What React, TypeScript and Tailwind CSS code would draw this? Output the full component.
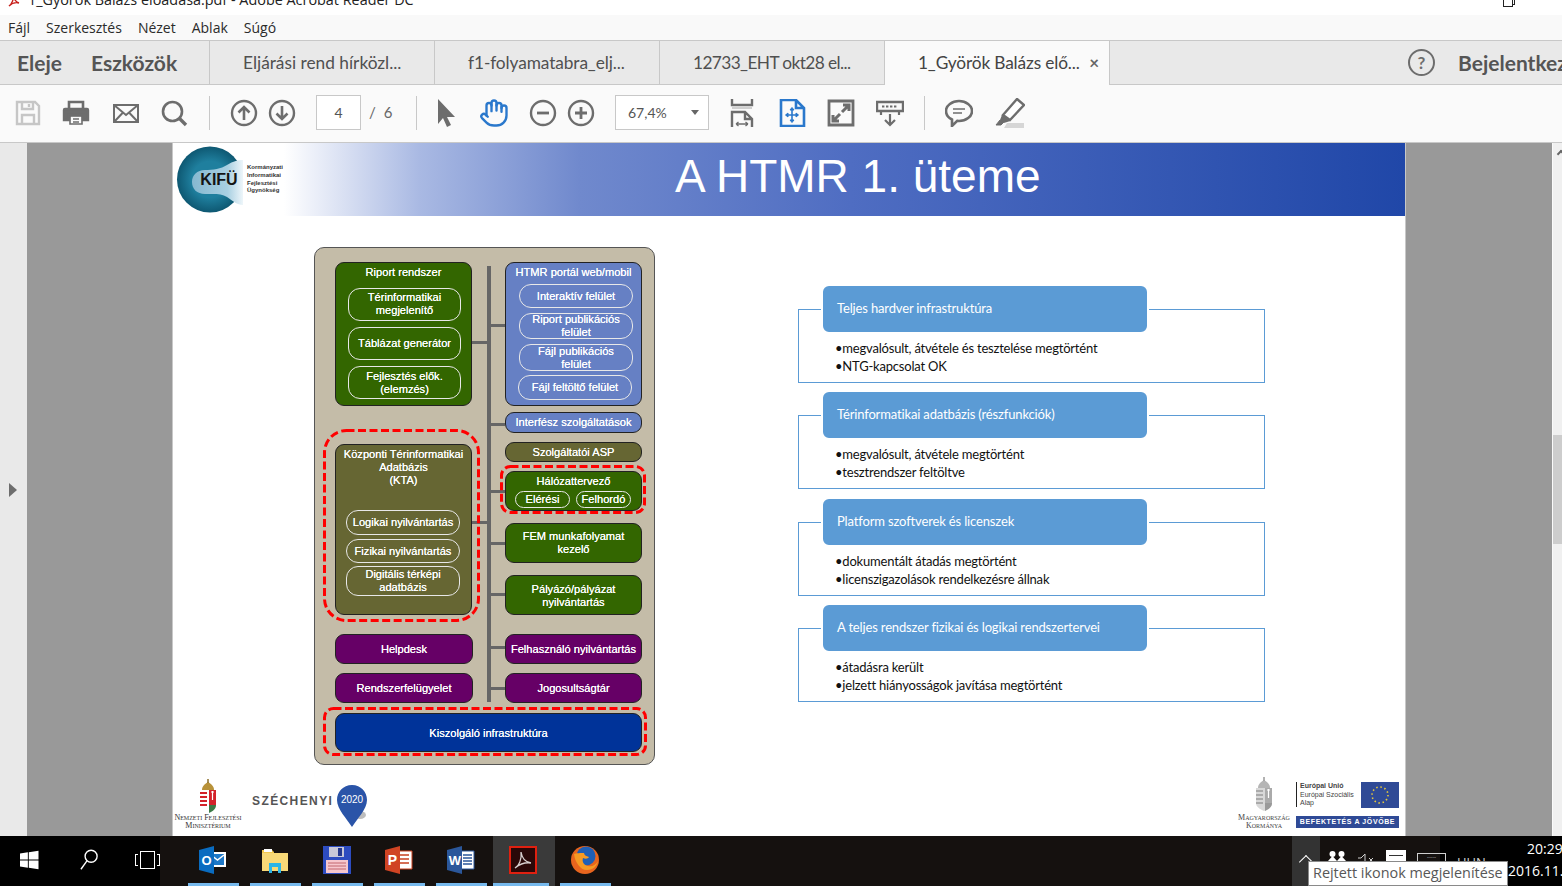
import { Hand } from 'lucide-react'
import type { ReactNode } from 'react'

const Sep = ({ className }: { className: string }) => <div className={`w-px h-[34px] bg-[#c8c8c8] shrink-0 ${className}`} />

const Icon = ({ className, children }: { className?: string; children: ReactNode }) => (
    <svg viewBox="0 0 28 28" className={`w-7 h-7 shrink-0 fill-none stroke-[#6d6d6d] ${className ?? ''}`} strokeWidth="2.4">
        {children}
    </svg>
)

const Toolbar = () => (
    <div className="flex h-[57px] items-center bg-[#fafafa] pb-[2px] pl-[14px] shrink-0">
        <Icon>
            <g stroke="#c6c6c6">
                <path d="M3 3h18l4 4v18H3z M8 3v7h11V3 M15 5v3 M8 25v-9h12v9" />
            </g>
        </Icon>
        <Icon className="ml-5">
            <path d="M7 9V3h14v6" strokeWidth="2.6" />
            <path d="M3 10h22a1 1 0 0 1 1 1v10h-5v-5H7v5H2V11a1 1 0 0 1 1-1z" fill="#6d6d6d" />
            <path d="M8 17h12v8H8z M11 20h6 M11 23h6" strokeWidth="1.6" />
        </Icon>
        <Icon className="ml-[22px]">
            <path d="M2 6h24v17H2z M2 6l12 10L26 6 M2 23l9-9.5 M26 23l-9-9.5" strokeWidth="2" />
        </Icon>
        <Icon className="ml-5">
            <circle cx="12.5" cy="12.5" r="9.5" strokeWidth="2.6" />
            <path d="M19.5 19.5l6.5 6.5" strokeWidth="3.4" />
        </Icon>
        <Sep className="ml-[21px]" />
        <Icon className="ml-5">
            <circle cx="14" cy="14" r="12" />
            <path d="M14 21V8 M8.5 13.5L14 8l5.5 5.5" strokeWidth="2.6" />
        </Icon>
        <Icon className="ml-[10px]">
            <circle cx="14" cy="14" r="12" />
            <path d="M14 7v13 M8.5 14.5L14 20l5.5-5.5" strokeWidth="2.6" />
        </Icon>
        <div className="ml-5 flex h-[35px] w-[45px] shrink-0 items-center justify-center border border-[#c8c8c8] bg-white text-[14px] text-[#555]">4</div>
        <div className="flex w-[47px] shrink-0 justify-start gap-[8px] pl-2 text-[15px] text-[#666]">
            <span>/</span>
            <span>6</span>
        </div>
        <Sep className="ml-[8px]" />
        <Icon className="ml-[15px]">
            <path d="M6 0l17 18h-8l4 8-4 2-4-9-5 6z" fill="#6d6d6d" stroke="none" />
        </Icon>
        <Hand className="ml-[19px] w-[30px] h-[30px] shrink-0 text-[#2a78cc]" strokeWidth={1.9} />
        <Icon className="ml-5">
            <circle cx="14" cy="14" r="12" />
            <path d="M8 14h12" strokeWidth="2.8" />
        </Icon>
        <Icon className="ml-[10px]">
            <circle cx="14" cy="14" r="12" />
            <path d="M8 14h12 M14 8v12" strokeWidth="2.8" />
        </Icon>
        <div className="ml-5 flex h-[35px] w-[94px] shrink-0 items-center justify-between border border-[#c8c8c8] bg-white pl-3 pr-[9px] text-[14px] text-[#555]">
            <span>67,4%</span>
            <span className="h-0 w-0 border-x-4 border-t-[5px] border-x-transparent border-t-[#666]" />
        </div>
        <Icon className="ml-[19px]">
            <path d="M4 0v6h20V0" strokeWidth="2.4" />
            <path d="M4 9h20" stroke="#d0d0d0" strokeWidth="2" />
            <path d="M4 28V13h13l7 7v8 M17 13v7h7" strokeWidth="2.4" />
            <path d="M8 25h12 M8 25l2.5-2 M8 25l2.5 2 M20 25l-2.5-2 M20 25l-2.5 2" strokeWidth="1.3" />
        </Icon>
        <Icon className="ml-[22px]">
            <g stroke="#2a78cc">
                <path d="M3 1h15l8 8v18H3z M18 1v8h8" strokeWidth="2.6" />
                <path d="M14 10v12 M8 16h12" strokeWidth="1.6" />
                <path d="M12 11l2-2.5 2 2.5z M12 21l2 2.5 2-2.5z M10 14l-2.5 2 2.5 2z M18 14l2.5 2-2.5 2z" fill="#2a78cc" strokeWidth="1" />
            </g>
        </Icon>
        <Icon className="ml-[21px]">
            <path d="M2 2h24v24H2z" strokeWidth="2.8" />
            <path d="M15 13l7-7 M16 6h6v6 M13 15l-7 7 M6 16v6h6" strokeWidth="3" />
        </Icon>
        <Icon className="ml-[21px]">
            <path d="M1 3h26v9H1z" strokeWidth="2.4" />
            <path d="M6 7.5h16" strokeWidth="2.2" strokeDasharray="2.4 1.6" />
            <path d="M5 12v4 M23 12v4 M14 15v11 M9 21l5 5 5-5" strokeWidth="2.2" />
        </Icon>
        <Sep className="ml-5" />
        <Icon className="ml-5">
            <path d="M14 2c7 0 13 4.5 13 10s-6 10-13 10c-.6 0-1.2 0-1.8-.1L7 27v-6.500C3.400 18.800 1 15.500 1 12 1 6.500 7 2 14 2z" strokeWidth="2.6" />
            <path d="M8 10h12 M8 14h9" strokeWidth="1.5" />
        </Icon>
        <svg viewBox="0 0 30 30" className="ml-[22px] h-[30px] w-[30px] shrink-0 fill-none stroke-[#6d6d6d]" strokeWidth="2.4">
            <path d="M22 1l7 6L15 22l-7-5z" fill="#fff" />
            <path d="M8 17l-2 5 3 2 6-2" fill="#6d6d6d" strokeWidth="2" />
            <path d="M5 22l-4 5h5l3-3" fill="#6d6d6d" strokeWidth="1" />
            <path d="M12 25h17v5H9z" fill="#d6d6d6" stroke="none" />
        </svg>
    </div>
)

const Tab = ({ label, active, className }: { label: string; active?: boolean; className?: string }) => (
    <div className={`relative flex w-[225px] shrink-0 items-center border-r border-[#c8c8c8] pl-[33px] text-[17.3px] ${active ? 'h-[44px] bg-[#fafafa] pb-px text-[#444]' : 'h-[43px] text-[#505050]'} ${className ?? ''}`}>
        {label}
        {active && <span className="absolute right-[10px] top-[9px] text-[17px] font-bold tracking-normal text-[#666]">×</span>}
    </div>
)

const Chrome = () => (
    <div className="flex flex-col shrink-0 font-['Lato',sans-serif]">
        <div className="relative h-[15px] overflow-hidden bg-white">
            <div className="flex -mt-[11px] items-center gap-[8px] pl-2 font-['Open_Sans',sans-serif] text-[14.4px] text-[#222]">
                <svg viewBox="0 0 12 16" className="h-4 w-3 fill-none stroke-[#c8201c]" strokeWidth="1.4">
                    <path d="M1 14c3-2 5-7 4-11 1 5 3 7 6 8-4-1-7 0-10 3z" />
                </svg>
                <span>1_Györök Balázs előadása.pdf - Adobe Acrobat Reader DC</span>
            </div>
            <div className="absolute left-[1505px] -top-[5px] h-[10px] w-[10px] border border-[#222] bg-white" />
            <div className="absolute left-[1503px] -top-[3px] h-[10px] w-[10px] border border-[#222] bg-white" />
        </div>
        <div className="flex h-[25px] items-center gap-[16px] bg-[#f9f9f9] pl-2 font-['Open_Sans',sans-serif] text-[14px] text-[#2b2b2b]">
            <span>Fájl</span>
            <span>Szerkesztés</span>
            <span>Nézet</span>
            <span>Ablak</span>
            <span>Súgó</span>
        </div>
        <div className="flex h-[45px] items-start border-y border-[#c8c8c8] bg-[#e9e9e9]">
            <div className="flex h-[43px] w-[210px] shrink-0 items-center gap-[29px] border-r border-[#c8c8c8] pl-[17px] text-[21px] font-bold text-[#555]">
                <span>Eleje</span>
                <span>Eszközök</span>
            </div>
            <Tab label="Eljárási rend hírközl..." />
            <Tab label="f1-folyamatabra_elj..." className="tracking-[-0.1px]" />
            <Tab label="12733_EHT okt28 el..." className="tracking-[-0.6px]" />
            <Tab label="1_Györök Balázs elő..." active className="tracking-[-0.15px]" />
            <div className="ml-auto flex h-[43px] items-center gap-[23px] overflow-hidden">
                <div className="flex h-[27px] w-[27px] items-center justify-center rounded-full border-[2.5px] border-[#6d6d6d] text-[17px] font-bold text-[#6d6d6d]">?</div>
                <span className="w-[104px] whitespace-nowrap text-[21px] font-bold text-[#555]">Bejelentkezés</span>
            </div>
        </div>
        <Toolbar />
    </div>
)

const Box = ({ className, children }: { className: string; children?: ReactNode }) => (
    <div className={`absolute flex justify-center text-center text-[11.1px] leading-[13px] text-white [text-shadow:0_0_0.6px_#fff] ${className}`}>{children}</div>
)

const Pill = ({ className, children }: { className: string; children: ReactNode }) => (
    <Box className={`items-center rounded-[12px] border-[1.5px] border-[#e8e8e8] ${className}`}>{children}</Box>
)

const Link = ({ className }: { className: string }) => <div className={`absolute h-[3px] bg-[#666] ${className}`} />

// dashed red frame, drawn so the dash length can follow the slide
const Dash = ({ className, w, h, r }: { className: string; w: number; h: number; r: number }) => (
    <svg className={`absolute ${className}`} width={w} height={h} fill="none">
        <rect x="1.5" y="1.5" width={w - 3} height={h - 3} rx={r} stroke="#ff0000" strokeWidth="3" strokeDasharray="8 3.5" />
    </svg>
)

const solid = 'items-center rounded-[9px] border border-[#222]'
const green = 'bg-[#336600]'
const purple = 'bg-[#660066]'
const olive = 'bg-[#666633]'
const blue = 'bg-[#6680c4]'

const Diagram = () => (
    <div className="relative ml-[141px] mt-[31px] h-[518px] w-[341px] shrink-0 rounded-[10px] border border-[#555] bg-[#c4bca8] font-['Liberation_Sans',sans-serif]">
        <div className="absolute left-[172px] top-[18px] h-[436px] w-1 bg-[#666]" />
        <Link className="left-[157px] top-[93px] w-[16px]" />
        <Link className="left-[157px] top-[273px] w-[16px]" />
        <Link className="left-[176px] top-[76px] w-[14px]" />
        <Link className="left-[176px] top-[175px] w-[14px]" />
        <Link className="left-[176px] top-[242px] w-[14px]" />
        <Link className="left-[176px] top-[294px] w-[14px]" />
        <Link className="left-[176px] top-[345px] w-[14px]" />
        <Link className="left-[176px] top-[398px] w-[14px]" />
        <Link className="left-[176px] top-[439px] w-[14px]" />

        <Box className={`left-[20px] top-[14px] h-[144px] w-[137px] rounded-[9px] border border-[#222] pt-[3px] ${green}`}>Riport rendszer</Box>
        <Pill className="left-[33px] top-[40px] h-[33px] w-[113px] pb-[2px]">Térinformatikai<br />megjelenítő</Pill>
        <Pill className="left-[33px] top-[79px] h-[33px] w-[113px]">Táblázat generátor</Pill>
        <Pill className="left-[33px] top-[118px] h-[33px] w-[113px]">Fejlesztés elők.<br />(elemzés)</Pill>

        <Box className={`left-[190px] top-[14px] h-[144px] w-[137px] rounded-[9px] border border-[#222] pt-[3px] ${blue}`}>HTMR portál web/mobil</Box>
        <Pill className="left-[204px] top-[36px] h-[24px] w-[114px]">Interaktív felület</Pill>
        <Pill className="left-[204px] top-[65px] h-[26px] w-[114px]">Riport publikációs<br />felület</Pill>
        <Pill className="left-[204px] top-[96px] h-[27px] w-[114px]">Fájl publikációs<br />felület</Pill>
        <Pill className="left-[203px] top-[127px] h-[25px] w-[114px]">Fájl feltöltő felület</Pill>

        <Box className={`left-[190px] top-[164px] h-[21px] w-[137px] ${solid} ${blue}`}>Interfész szolgáltatások</Box>
        <Box className={`left-[190px] top-[194px] h-[20px] w-[137px] ${solid} ${olive}`}>Szolgáltatói ASP</Box>
        <Dash className="left-[185px] top-[217px]" w={146} h={49} r={9} />
        <Box className={`left-[190px] top-[223px] h-[40px] w-[137px] rounded-[9px] border border-[#222] pt-[3px] ${green}`}>Hálózattervező</Box>
        <Pill className="left-[200px] top-[243px] h-[17px] w-[55px]">Elérési</Pill>
        <Pill className="left-[261px] top-[243px] h-[17px] w-[55px]">Felhordó</Pill>

        <Dash className="left-[8px] top-[181px]" w={157} h={193} r={22} />
        <Box className={`left-[20px] top-[196px] h-[171px] w-[137px] rounded-[9px] border border-[#222] pt-[3px] ${olive}`}>Központi Térinformatikai<br />Adatbázis<br />(KTA)</Box>
        <Pill className="left-[31px] top-[262px] h-[25px] w-[114px]">Logikai nyilvántartás</Pill>
        <Pill className="left-[31px] top-[291px] h-[24px] w-[114px]">Fizikai nyilvántartás</Pill>
        <Pill className="left-[31px] top-[318px] h-[30px] w-[114px]">Digitális térképi<br />adatbázis</Pill>

        <Box className={`left-[190px] top-[275px] h-[40px] w-[137px] ${solid} ${green}`}>FEM munkafolyamat<br />kezelő</Box>
        <Box className={`left-[190px] top-[327px] h-[40px] w-[137px] pt-px ${solid} ${green}`}>Pályázó/pályázat<br />nyilvántartás</Box>
        <Box className={`left-[20px] top-[386px] h-[30px] w-[138px] ${solid} ${purple}`}>Helpdesk</Box>
        <Box className={`left-[20px] top-[425px] h-[30px] w-[138px] ${solid} ${purple}`}>Rendszerfelügyelet</Box>
        <Box className={`left-[190px] top-[386px] h-[30px] w-[137px] ${solid} ${purple}`}>Felhasználó nyilvántartás</Box>
        <Box className={`left-[190px] top-[425px] h-[30px] w-[137px] ${solid} ${purple}`}>Jogosultságtár</Box>

        <Dash className="left-[8px] top-[459px]" w={324} h={49} r={9} />
        <Box className={`left-[20px] top-[465px] h-[39px] w-[307px] pt-px ${solid} bg-[#003399]`}>Kiszolgáló infrastruktúra</Box>
    </div>
)

const cards = [
    { title: 'Teljes hardver infrastruktúra', lines: ['megvalósult, átvétele és tesztelése megtörtént', 'NTG-kapcsolat OK'] },
    { title: 'Térinformatikai adatbázis (részfunkciók)', lines: ['megvalósult, átvétele megtörtént', 'tesztrendszer feltöltve'] },
    { title: 'Platform szoftverek és licenszek', lines: ['dokumentált átadás megtörtént', 'licenszigazolások rendelkezésre állnak'] },
    { title: 'A teljes rendszer fizikai és logikai rendszertervei', lines: ['átadásra került', 'jelzett hiányosságok javítása megtörtént'] },
]

const Cards = () => (
    <div className="ml-[143px] mt-[70px] flex w-[467px] shrink-0 flex-col gap-[9px] font-['Lato',sans-serif]">
        {cards.map((c) => (
            <div key={c.title} className="relative pt-[23px] nth-3:mt-px">
                <div className="h-[74px] border border-[#5b9bd5] pl-[36px] pt-[30px] text-[13px] leading-[17.5px] tracking-[-0.2px] text-[#111]">
                    {c.lines.map((l) => (
                        <div key={l}>•{l}</div>
                    ))}
                </div>
                <div className="absolute left-[23px] top-[-2px] flex h-[50px] w-[328px] items-center rounded-[8px] border-2 border-white bg-[#5b9bd5] pl-[14px] text-[13px] tracking-[-0.15px] text-white">
                    {c.title}
                </div>
            </div>
        ))}
    </div>
)

const Crest = ({ gray }: { gray?: boolean }) => (
    <svg viewBox="0 0 18 34" className="h-[34px] w-[18px]">
        <path d="M3 11c0-4 3-6 6-8 3 2 6 4 6 8z" fill={gray ? '#b5b5b5' : '#b8923a'} />
        <path d="M9 0v4" stroke={gray ? '#999' : '#8a6d2a'} strokeWidth="1.5" />
        <path d="M1 11h16v15c0 4-4 6-8 8-4-2-8-4-8-8z" fill={gray ? '#d8d8d8' : '#fff'} />
        <path d="M1 13h7v2H1z M1 17h7v2H1z M1 21h7v2H1z M1 25h7v2H1z M10 11h7v15h-7z" fill={gray ? '#aaa' : '#d3232b'} />
        <path d="M12 13h3 M13.5 12v9" stroke="#fff" strokeWidth="1.2" />
        <path d="M10 26h7c0 4-3 6-7 8z" fill={gray ? '#999' : '#3b7a46'} />
    </svg>
)

const Footer = () => (
    <div className="flex h-[61px] shrink-0 items-start justify-between">
        <div className="flex items-start pl-px pt-[4px]">
            <div className="flex w-[68px] flex-col items-center font-['Liberation_Serif',serif] text-[8px] leading-[8px] text-[#333] [font-variant:small-caps]">
                <Crest />
                <span className="mt-[1px] whitespace-nowrap">Nemzeti Fejlesztési</span>
                <span>Minisztérium</span>
            </div>
            <span className="ml-[10px] mt-[13px] font-['Liberation_Sans',sans-serif] text-[12px] font-bold tracking-[1.4px] text-[#555]">SZÉCHENYI</span>
            <svg viewBox="0 0 32 42" className="ml-[3px] mt-[6px] h-[42px] w-[32px]">
                <ellipse cx="24" cy="30" rx="6" ry="4" fill="#bdbdbd" />
                <path d="M16 0c9 0 15 7 15 15 0 9-10 19-15 27C11 34 1 24 1 15 1 7 7 0 16 0z" fill="#2a54a8" />
                <text x="16" y="18" textAnchor="middle" fontSize="10" fill="#fff" fontFamily="Liberation Sans">2020</text>
            </svg>
        </div>
        <div className="flex items-start pr-[6px] pt-[2px]">
            <div className="flex w-[56px] flex-col items-center font-['Liberation_Serif',serif] text-[8px] leading-[8px] text-[#444] [font-variant:small-caps]">
                <Crest gray />
                <span className="mt-[3px]">Magyarország</span>
                <span>Kormánya</span>
            </div>
            <div className="ml-[4px] flex w-[103px] flex-col">
                <div className="flex justify-between pt-[5px]">
                    <div className="h-[25px] border-l border-[#222] pl-[3px] font-['Liberation_Sans',sans-serif] text-[7px] leading-[8.5px] text-[#444]">
                        <div className="font-bold">Európai Unió</div>
                        <div>Európai Szociális</div>
                        <div>Alap</div>
                    </div>
                    <svg viewBox="0 0 38 26" className="h-[26px] w-[38px]">
                        <rect width="38" height="26" fill="#2f4a96" />
                        <circle cx="19" cy="13" r="8" fill="none" stroke="#e8c93c" strokeWidth="1.6" strokeDasharray="1.5 2.7" />
                    </svg>
                </div>
                <div className="mt-[8px] flex h-[12px] items-center justify-center bg-[#2f4a96] font-['Liberation_Sans',sans-serif] text-[7px] font-bold tracking-[0.6px] text-white">BEFEKTETÉS A JÖVŐBE</div>
            </div>
        </div>
    </div>
)

const Slide = () => (
    <div className="flex w-[1234px] shrink-0 flex-col border-x border-[#c8c8c8] bg-white">
        <div className="flex h-[73px] shrink-0 items-center bg-[linear-gradient(90deg,#fff_9%,#a9b9e3_20%,#7089cd_33%,#4f6dc2_55%,#2047a8_100%)]">
            <svg viewBox="0 0 72 72" className="ml-[2px] h-[72px] w-[72px] shrink-0">
                <defs>
                    <radialGradient id="kifu" cx="0.5" cy="0.5" r="0.55">
                        <stop offset="0.5" stopColor="#1f7f9e" />
                        <stop offset="1" stopColor="#0a4f68" />
                    </radialGradient>
                    <linearGradient id="kifublob" x1="0" x2="1" y1="0" y2="0">
                        <stop offset="0" stopColor="#86b8d0" />
                        <stop offset="0.7" stopColor="#a9d0e2" />
                        <stop offset="1" stopColor="#eef6fa" />
                    </linearGradient>
                </defs>
                <circle cx="35" cy="35.5" r="33" fill="url(#kifu)" />
                <path d="M30 26C38 26 46 25 52 21C58 17 64 16 68 16L68 61C62 61 58 57 52 53C46 49 38 50 30 50C22 50 17 45 17 38C17 31 22 26 30 26Z" fill="url(#kifublob)" />
                <text x="44" y="41" textAnchor="middle" fontSize="16" fontWeight="700" fill="#141414" fontFamily="Liberation Sans">KIFÜ</text>
            </svg>
            <div className="w-[36px] shrink-0 whitespace-nowrap font-['Liberation_Sans',sans-serif] text-[6px] font-bold leading-[7.7px] text-[#333]">
                <div>Kormányzati</div>
                <div>Informatikai</div>
                <div>Fejlesztési</div>
                <div>Ügynökség</div>
            </div>
            <h1 className="-mt-[6px] ml-[392px] whitespace-nowrap font-['Liberation_Sans',sans-serif] text-[46px] text-white">A HTMR 1. üteme</h1>
        </div>
        <div className="flex h-[559px] shrink-0 items-start">
            <Diagram />
            <Cards />
        </div>
        <Footer />
    </div>
)

const Main = () => (
    <div className="flex h-[694px] border-t border-[#c8c8c8] bg-[#999]">
        <div className="flex w-[27px] shrink-0 items-center bg-[#e9e9e9] pl-[9px]">
            <div className="h-0 w-0 border-y-[7px] border-l-[8px] border-y-transparent border-l-[#6d6d6d]" />
        </div>
        <div className="ml-[145px] flex">
            <Slide />
        </div>
        <div className="ml-[146px] flex w-[10px] shrink-0 flex-col border-l border-[#fafafa] bg-[#f0f0f0]">
            <div className="ml-[5px] mt-[8px] h-[6px] w-[6px] rotate-45 border-l-2 border-t-2 border-[#666]" />
            <div className="mt-[278px] h-[109px] bg-[#cdcdcd]" />
        </div>
    </div>
)

const TaskBtn = ({ children, active }: { children: ReactNode; active?: boolean }) => (
    <div className={`relative flex h-full w-[62px] shrink-0 items-center justify-center pb-[3px] pr-[2px] ${active ? 'bg-[#3a3a3a]' : ''}`}>
        {children}
        <div className={`absolute bottom-0 h-[3px] bg-[#76b9ed] ${active ? 'left-0 right-[6px]' : 'left-[5px] right-[6px]'}`} />
    </div>
)

const Taskbar = () => (
    <div className="relative flex h-[50px] shrink-0 bg-black font-['Open_Sans',sans-serif] text-white">
        <div className="flex w-[160px] shrink-0 items-center pb-[2px]">
            <svg viewBox="0 0 20 20" className="ml-[20px] h-5 w-5 fill-white">
                <path d="M0 3l8.5-1.3v7.800H0z M9.500 1.500L20 0v9.500H9.500z M0 10.500h8.500v7.800L0 17z M9.500 10.500H20V20L9.500 18.500z" />
            </svg>
            <svg viewBox="0 0 20 24" className="ml-[41px] h-6 w-5 fill-none stroke-white" strokeWidth="1.5">
                <circle cx="12" cy="8" r="6.5" />
                <path d="M7.5 13L1 22" />
            </svg>
            <div className="ml-[37px] flex items-center">
                <div className="h-[12px] w-[3px] border-y border-l border-white" />
                <div className="mx-[2px] h-[18px] w-[15px] border border-white" />
                <div className="h-[12px] w-[3px] border-y border-r border-white" />
            </div>
        </div>
        <div className="flex w-[1280px] shrink-0 bg-[#15110f]">
            <div className="ml-[23px] flex h-full">
                <TaskBtn>
                    <svg viewBox="0 0 28 28" className="h-7 w-7">
                        <path d="M10 6h17v15H10z" fill="#fff" />
                        <path d="M12 8h13v11H12z" fill="#1d78c8" />
                        <path d="M12 9l6.5 5L25 9" fill="none" stroke="#fff" strokeWidth="1.5" />
                        <path d="M0 4l15-4v28L0 24z" fill="#0a6cc0" />
                        <text x="7.5" y="18.5" textAnchor="middle" fontSize="13" fontWeight="700" fill="#fff" fontFamily="Liberation Sans">O</text>
                    </svg>
                </TaskBtn>
                <TaskBtn>
                    <svg viewBox="0 0 28 28" className="h-7 w-7">
                        <path d="M1 4h10l2 2v4H1z" fill="#f2c94f" />
                        <path d="M3 3h8v3H3z" fill="#fff" />
                        <path d="M1 7h26v18H1z" fill="#f8d977" />
                        <path d="M8 27V17h12v10h-3v-6h-6v6z" fill="#2cb5e8" />
                    </svg>
                </TaskBtn>
                <TaskBtn>
                    <svg viewBox="0 0 28 28" className="h-7 w-7">
                        <path d="M0 0h28v28H0z" fill="#2d4cc0" />
                        <path d="M6 1h15v10H6z" fill="#c8c8d8" />
                        <path d="M15 2h4v8h-4z" fill="#25388f" />
                        <path d="M3 14h22v13H3z" fill="#f7c7cd" />
                        <path d="M5 17h18 M5 20h18 M5 23h18" stroke="#c2666f" strokeWidth="1" />
                    </svg>
                </TaskBtn>
                <TaskBtn>
                    <svg viewBox="0 0 28 28" className="h-7 w-7">
                        <path d="M12 5h15v18H12z" fill="#fff" stroke="#c8401f" strokeWidth="1" />
                        <path d="M15 9h9 M15 13h9 M15 17h9" stroke="#c8401f" strokeWidth="1.5" />
                        <path d="M0 4l15-4v28L0 24z" fill="#d04423" />
                        <text x="7.5" y="19" textAnchor="middle" fontSize="14" fontWeight="700" fill="#fff" fontFamily="Liberation Sans">P</text>
                    </svg>
                </TaskBtn>
                <TaskBtn>
                    <svg viewBox="0 0 28 28" className="h-7 w-7">
                        <path d="M12 5h15v18H12z" fill="#fff" stroke="#2b579a" strokeWidth="1" />
                        <path d="M16 9h9 M16 12h9 M16 15h9 M16 18h9" stroke="#2b579a" strokeWidth="1.5" />
                        <path d="M0 4l15-4v28L0 24z" fill="#2b579a" />
                        <text x="8" y="19" textAnchor="middle" fontSize="13" fontWeight="700" fill="#fff" fontFamily="Liberation Sans">W</text>
                    </svg>
                </TaskBtn>
                <TaskBtn active>
                    <svg viewBox="0 0 28 28" className="h-7 w-7">
                        <rect x="1" y="1" width="26" height="26" fill="#2a0808" stroke="#e02010" strokeWidth="2" />
                        <path d="M6 22c4-2 7-9 6-16 1 7 4 10 10 11-6-1-11 1-16 5z" fill="none" stroke="#d8d0d0" strokeWidth="1.3" />
                    </svg>
                </TaskBtn>
                <TaskBtn>
                    <svg viewBox="0 0 28 28" className="h-7 w-7">
                        <circle cx="14" cy="14" r="14" fill="#e8651e" />
                        <circle cx="15" cy="10" r="9.5" fill="#1f5fb5" />
                        <path d="M3 8c1 8 6 16 13 16 6 0 10-4 11-9-2 4-6 6-10 5-5-1-6-5-5-8 2 1 5 1 6-1-3-1-5-2-5-4-3 0-8 0-10 1z" fill="#f59a23" />
                    </svg>
                </TaskBtn>
            </div>
            <div className="ml-[675px] flex h-full w-[28px] shrink-0 items-center justify-center bg-[#333]">
                <div className="mt-[2px] h-[10px] w-[10px] rotate-45 border-l border-t border-white" />
            </div>
            <div className="flex items-start pt-[15px]">
                <svg viewBox="0 0 18 10" className="ml-[8px] h-[10px] w-[18px] shrink-0 fill-white">
                    <circle cx="4.5" cy="3" r="3" />
                    <circle cx="13.5" cy="3" r="3" />
                    <path d="M0 10l4.5-5 4.500 5z M9 10l4.500-5 4.500 5z" />
                </svg>
                <svg viewBox="0 0 18 10" className="ml-[11px] mt-[3px] h-[10px] w-[18px] shrink-0 fill-none stroke-[#cfcfcf]" strokeWidth="1">
                    <path d="M1 4h3l4-4v10 M12 4l4 4 M16 4l-4 4" />
                </svg>
                <div className="ml-[11px] -mt-[1px] flex h-[12px] w-[20px] shrink-0 flex-col bg-white pt-[5px]">
                    <div className="mx-[3px] h-px bg-[#333]" />
                </div>
                <div className="ml-[11px] mt-[2px] flex h-[10px] w-[29px] shrink-0 justify-center border border-[#cfcfcf] pt-[1px] text-[5px] leading-[5px]">
                    ·······
                </div>
                <span className="ml-[11px] mt-[3px] text-[13px] leading-[16px] text-[#cfcfcf]">HUN</span>
            </div>
        </div>
        <div className="absolute right-0 top-[3px] w-[35px] overflow-hidden whitespace-nowrap text-[14px] leading-[20px]">20:29</div>
        <div className="absolute left-[1508px] top-[25px] whitespace-nowrap text-[14px] leading-[20px]">2016.11.</div>
        <div className="absolute left-[1308px] top-[25px] flex h-[25px] w-[200px] items-center border border-[#8a8a8a] bg-white pb-px pl-[4px] text-[14.4px] whitespace-nowrap text-[#575757]">Rejtett ikonok megjelenítése</div>
    </div>
)

export default function App() {
    return (
        <div className="flex h-[886px] w-[1562px] flex-col overflow-hidden">
            <Chrome />
            <Main />
            <Taskbar />
        </div>
    )
}
